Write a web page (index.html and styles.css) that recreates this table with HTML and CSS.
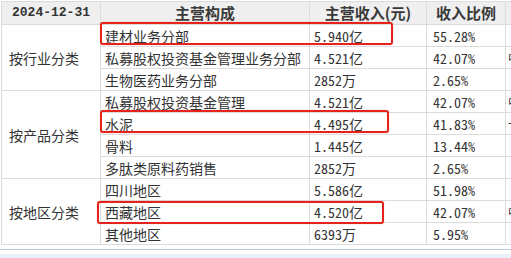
FILE: index.html
```html
<!DOCTYPE html>
<html lang="zh-CN">
<head>
<meta charset="utf-8">
<title>主营构成</title>
<link rel="stylesheet" href="styles.css">
</head>
<body>
<div class="wrap">
  <table class="biz">
    <colgroup>
      <col class="c1"><col class="c2"><col class="c3"><col class="c4"><col class="c5">
    </colgroup>
    <thead>
      <tr><th class="date">2024-12-31</th><th>主营构成</th><th>主营收入(元)</th><th>收入比例</th><th></th></tr>
    </thead>
    <tbody>
      <tr><td rowspan="3" class="grp">按行业分类</td><td>建材业务分部</td><td>5.940亿</td><td class="pct">55.28%</td><td class="x"></td></tr>
      <tr><td>私募股权投资基金管理业务分部</td><td>4.521亿</td><td class="pct">42.07%</td><td class="x">中</td></tr>
      <tr><td>生物医药业务分部</td><td>2852万</td><td class="pct">2.65%</td><td class="x"></td></tr>
      <tr><td rowspan="4" class="grp">按产品分类</td><td>私募股权投资基金管理</td><td>4.521亿</td><td class="pct">42.07%</td><td class="x">中</td></tr>
      <tr><td>水泥</td><td>4.495亿</td><td class="pct">41.83%</td><td class="x">一</td></tr>
      <tr><td>骨料</td><td>1.445亿</td><td class="pct">13.44%</td><td class="x"></td></tr>
      <tr><td>多肽类原料药销售</td><td>2852万</td><td class="pct">2.65%</td><td class="x"></td></tr>
      <tr><td rowspan="3" class="grp">按地区分类</td><td>四川地区</td><td>5.586亿</td><td class="pct">51.98%</td><td class="x"></td></tr>
      <tr><td>西藏地区</td><td>4.520亿</td><td class="pct">42.07%</td><td class="x">中</td></tr>
      <tr><td>其他地区</td><td>6393万</td><td class="pct">5.95%</td><td class="x"></td></tr>
    </tbody>
  </table>
  <div class="mark m1"></div>
  <div class="mark m2"></div>
  <div class="mark m3"></div>
</div>
<div class="foot"><div class="foot-bar"></div></div>
</body>
</html>
```
FILE: styles.css
```css
html, body {
  margin: 0;
  padding: 0;
  background: #fff;
  overflow: hidden;
}
body {
  width: 511px;
  height: 258px;
  font-family: "Noto Sans Mono CJK SC", "Noto Sans CJK SC", monospace;
  color: #333;
}
.wrap {
  position: relative;
  padding: 1px 0 0 1px;
}
.biz {
  border-collapse: collapse;
  table-layout: fixed;
  width: 584px;
  font-size: 14px;
}
.c1 { width: 99px; }
.c2 { width: 209px; }
.c3 { width: 117px; }
.c4 { width: 79px; }
.c5 { width: 80px; }
.biz th, .biz td {
  border: 1px solid #dcdcdc;
  padding: 0 0 0 4px;
  white-space: nowrap;
  overflow: hidden;
  text-align: left;
  line-height: 20px;
}
.biz th {
  height: 22px;
  background: #efefef;
  font-family: "Noto Sans CJK SC", sans-serif;
  font-weight: 700;
  font-size: 15px;
  color: #3a3a3a;
  text-align: center;
  padding: 0;
}
.biz th.date {
  font-family: "Liberation Mono", monospace;
  font-size: 13px;
  color: #333;
}
.biz td {
  height: 21px;
}
.biz td.grp {
  padding-left: 7px;
}
.biz td.pct {
  padding-left: 6px;
}
.biz td.x {
  padding-left: 2px;
  font-size: 12px;
}
.mark {
  position: absolute;
  border: 2px solid #e4241c;
  border-radius: 3px;
  box-shadow: 0 0 1px rgba(228, 36, 28, 0.6);
}
.m1 { left: 100px; top: 22px; width: 289px; height: 19px; }
.m2 { left: 100px; top: 110px; width: 285px; height: 19px; }
.m3 { left: 97px; top: 201px; width: 283px; height: 19px; }
.foot {
  margin-top: 4px;
  border-top: 1px solid #bccbda;
  padding-top: 4px;
}
.foot-bar {
  height: 10px;
  background: #e9f0f8;
}
```
